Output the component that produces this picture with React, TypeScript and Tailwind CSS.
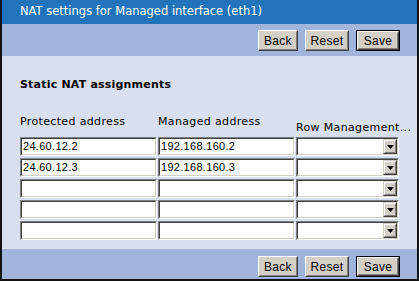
import React from "react";

const verdana = { fontFamily: '"DejaVu Sans", Verdana, sans-serif' };
const sans = { fontFamily: '"Liberation Sans", Arial, sans-serif' };

function Btn({ label, def }: { label: string; def?: boolean }) {
  const inner = (
    <div className="border border-t-white border-l-white border-r-[#404040] border-b-[#404040] bg-[#d4d0c8]">
      <div className="border border-t-[#d4d0c8] border-l-[#d4d0c8] border-r-[#808080] border-b-[#808080] h-full flex items-center justify-center text-[12px] text-black leading-none tracking-[0.3px]">
        {label}
      </div>
    </div>
  );
  if (def) {
    return (
      <div className="border border-black h-[21px] w-[44px] flex flex-col [&>div]:flex-1" style={sans}>
        {inner}
      </div>
    );
  }
  return (
    <div className={`h-[21px] flex flex-col [&>div]:flex-1 ${label === "Back" ? "w-[40px]" : "w-[44px]"}`} style={sans}>
      {inner}
    </div>
  );
}

function Toolbar({ h, pt }: { h: string; pt: string }) {
  return (
    <div className={`${h} ${pt} bg-[#a0b4dc] flex justify-end items-start pr-[17px] gap-[7px]`}>
      <Btn label="Back" />
      <Btn label="Reset" />
      <Btn label="Save" def />
    </div>
  );
}

function Inset({ w, children }: { w: string; children?: React.ReactNode }) {
  return (
    <div className={`${w} h-[19px] border border-t-[#808080] border-l-[#808080] border-r-white border-b-white`}>
      <div className="h-full border border-t-[#404040] border-l-[#404040] border-r-[#d4d0c8] border-b-[#d4d0c8] bg-white flex items-center">
        {children}
      </div>
    </div>
  );
}

function Field({ value }: { value: string }) {
  return (
    <Inset w="w-[137px]">
      <span className="pl-[1px] text-[11px] text-black leading-none tracking-[0.3px]" style={sans}>
        {value}
      </span>
    </Inset>
  );
}

function SelectBox() {
  return (
    <Inset w="w-[103px]">
      <div className="flex-1" />
      <div className="w-[14px] h-full border border-t-[#d4d0c8] border-l-[#d4d0c8] border-r-[#404040] border-b-[#404040] bg-[#d4d0c8]">
        <div className="h-full border border-t-white border-l-white border-r-[#808080] border-b-[#808080] flex items-center justify-center">
          <svg width="7" height="4" viewBox="0 0 7 4">
            <path d="M0 0H7L3.5 4Z" fill="#000" />
          </svg>
        </div>
      </div>
    </Inset>
  );
}

const rows = [
  ["24.60.12.2", "192.168.160.2"],
  ["24.60.12.3", "192.168.160.3"],
  ["", ""],
  ["", ""],
  ["", ""],
];

export default function App() {
  return (
    <div className="w-[419px] h-[281px] bg-[#111] px-[2px] pb-[2px] flex flex-col overflow-hidden">
      <div
        className="h-[24px] bg-[#2174b9] text-white text-[11.5px] pl-[18px] flex items-center"
        style={verdana}
      >
        NAT settings for Managed interface (eth1)
      </div>
      <Toolbar h="h-[32px]" pt="pt-[6px]" />
      <div className="flex-1 bg-[#dadfef] pl-[18px] pt-[22px] flex flex-col" style={verdana}>
        <div className="h-[13px] leading-[13px] text-[11px] font-bold text-black tracking-[0.2px]">Static NAT assignments</div>
        <div className="mt-[24px] h-[22px] flex gap-[1px] text-[11px] text-black leading-[13px] tracking-[0.35px]">
          <div className="w-[137px]">Protected address</div>
          <div className="w-[137px]">Managed address</div>
          <div className="w-[103px] pt-[6px] whitespace-nowrap">Row Management...</div>
        </div>
        <div className="flex flex-col gap-[2px]">
          {rows.map((r, i) => (
            <div key={i} className="flex gap-[1px]">
              <Field value={r[0]} />
              <Field value={r[1]} />
              <SelectBox />
            </div>
          ))}
        </div>
      </div>
      <Toolbar h="h-[30px]" pt="pt-[7px]" />
    </div>
  );
}
